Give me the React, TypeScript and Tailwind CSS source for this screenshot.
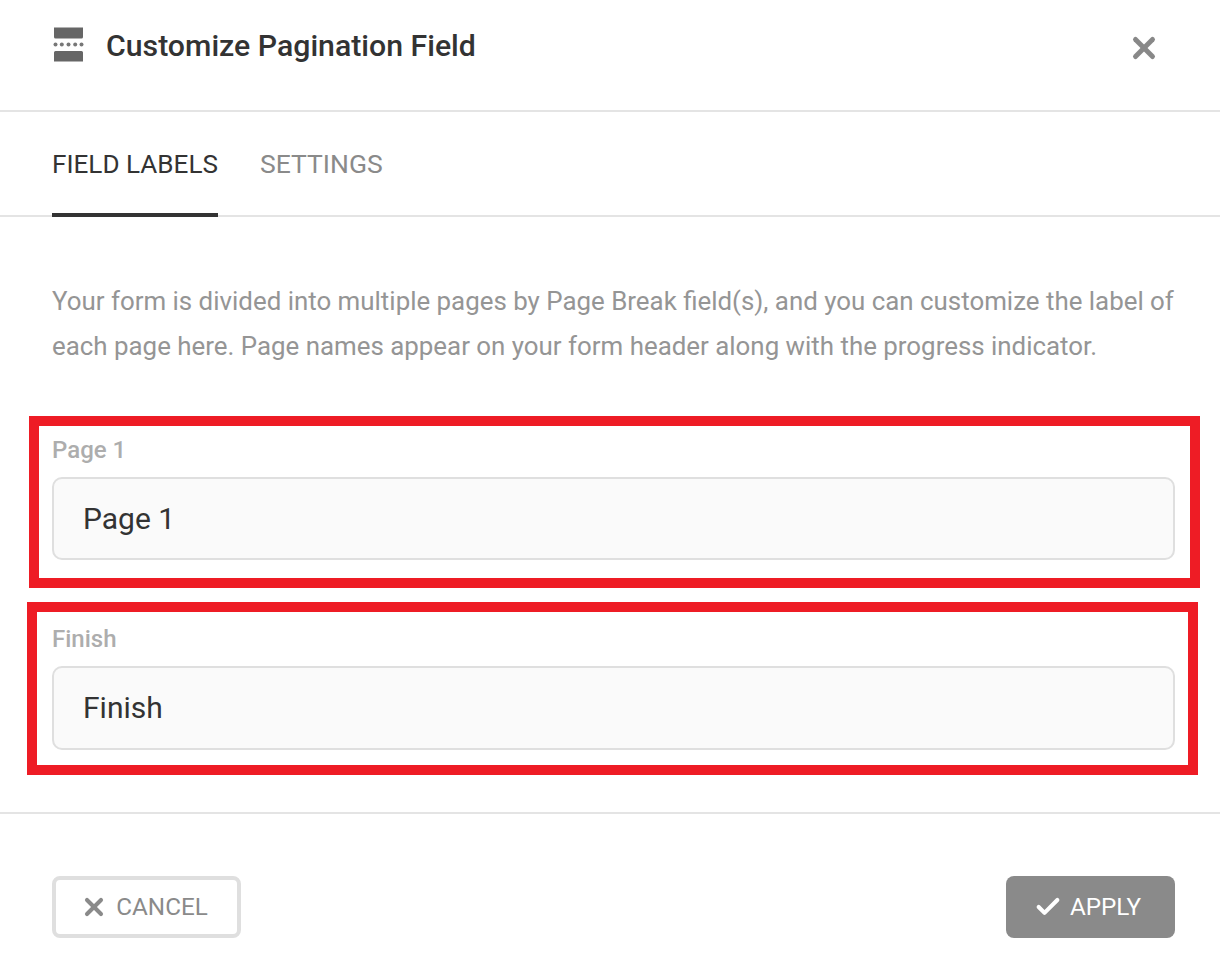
import { Check, X } from "lucide-react";

function PageBreakIcon() {
  return (
    <svg width="31" height="35" viewBox="0 0 31 35" className="block">
      <path d="M1 0.500h29v9.500a1.500 1.500 0 0 1-1.500 1.500h-26A1.500 1.500 0 0 1 1 10z" fill="#666666" />
      <path d="M2.500 24h26a1.500 1.500 0 0 1 1.500 1.500v9H1v-9A1.500 1.500 0 0 1 2.500 24z" fill="#666666" />
      {[2.500, 8.800, 15.500, 22.200, 28.500].map((x) => (
        <circle key={x} cx={x} cy="17.500" r="2" fill="#777777" />
      ))}
    </svg>
  );
}

function Field({ label, labelClass, inputClass, boxClass }: { label: string; labelClass: string; inputClass: string; boxClass: string }) {
  return (
    <div className="relative">
      <div className={`text-[24px] leading-[28px] font-medium text-[#adadad] ${labelClass}`}>{label}</div>
      <div className={`mt-[13px] flex items-center rounded-[10px] border-2 border-[#dfdfdf] bg-[#fafafa] pl-[29px] text-[30px] text-[#333333] ${inputClass}`}>
        {label}
      </div>
      <div className={`absolute border-[10px] border-[#ee1c25] ${boxClass}`} />
    </div>
  );
}

export default function App() {
  return (
    <div className="h-[969px] w-[1220px] overflow-hidden bg-white font-['Roboto',sans-serif]">
      <div className="flex h-[112px] items-start justify-between border-b-2 border-[#e4e4e4] pl-[53px] pr-[59px]">
        <div className="flex items-start">
          <div className="mt-[27px]">
            <PageBreakIcon />
          </div>
          <h1 className="ml-[22px] mt-[28px] text-[30.250px] leading-[36px] font-medium text-[#333333]">Customize Pagination Field</h1>
        </div>
        <X className="mt-[31px] text-[#888888]" size={34} strokeWidth={3.500} />
      </div>

      <div className="flex h-[105px] gap-[42px] border-b-2 border-[#e4e4e4] px-[52px]">
        <div className="-mb-[2px] flex h-[105px] items-center border-b-4 border-[#333333] pt-[5px] text-[26.100px] text-[#333333]">FIELD LABELS</div>
        <div className="flex h-[103px] items-center text-[26.500px] text-[#8a8a8a]">SETTINGS</div>
      </div>

      <div className="pl-[52px] pr-[40px] pt-[62px]">
        <p className="text-[25.880px] leading-[45px] text-[#959595]">
          Your form is divided into multiple pages by Page Break field(s), and you can customize the label of
          <br />
          each page here. Page names appear on your form header along with the progress indicator.
        </p>
      </div>

      <div className="mt-[67px] flex flex-col gap-[64px] pl-[52px] pr-[45px]">
        <Field label="Page 1" labelClass="" inputClass="h-[83px]" boxClass="-top-[20px] -left-[23px] -right-[25px] -bottom-[28px]" />
        <Field label="Finish" labelClass="pt-[1px]" inputClass="h-[84px] pb-[2px]" boxClass="-top-[22px] -left-[25px] -right-[23px] -bottom-[25px]" />
      </div>

      <div className="mt-[62px] flex h-[156px] items-start justify-between border-t-2 border-[#e4e4e4] pl-[52px] pr-[45px] pt-[62px]">
        <button className="flex h-[62px] w-[189px] items-center justify-center gap-[8px] rounded-[8px] border-4 border-[#dfdfdf] bg-white pr-[5px] text-[24.250px] text-[#8a8a8a]">
          <X size={28} strokeWidth={3.500} />
          CANCEL
        </button>
        <button className="flex h-[62px] w-[169px] items-center justify-center gap-[8px] rounded-[8px] bg-[#8a8a8a] pr-[6px] text-[24.250px] text-white">
          <Check size={28} strokeWidth={3.500} />
          APPLY
        </button>
      </div>
    </div>
  );
}
